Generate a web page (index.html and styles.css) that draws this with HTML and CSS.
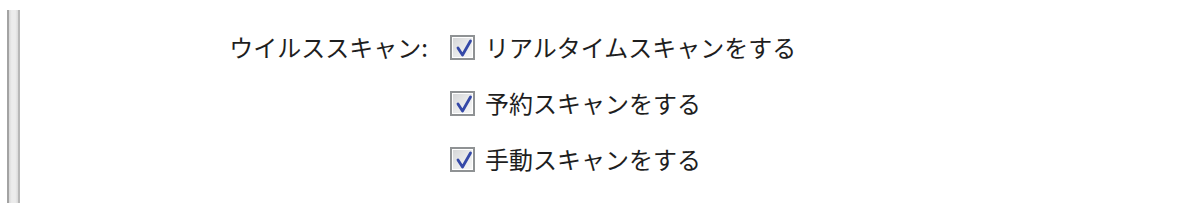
FILE: index.html
```html
<!DOCTYPE html>
<html lang="ja">
<head>
<meta charset="utf-8">
<link rel="stylesheet" href="styles.css">
</head>
<body>
<div class="page">
  <div class="bar"></div>
  <div class="form">
    <div class="label">ウイルススキャン:</div>
    <div class="options">
      <label class="opt"><span class="cb"><svg viewBox="0 0 21 21" width="21" height="21"><path d="M6 11 L10.5 18 L18.5 4" fill="none" stroke="#3549a8" stroke-width="2.8" stroke-linecap="round" stroke-linejoin="round"/></svg></span><span class="txt">リアルタイムスキャンをする</span></label>
      <label class="opt"><span class="cb"><svg viewBox="0 0 21 21" width="21" height="21"><path d="M6 11 L10.5 18 L18.5 4" fill="none" stroke="#3549a8" stroke-width="2.8" stroke-linecap="round" stroke-linejoin="round"/></svg></span><span class="txt">予約スキャンをする</span></label>
      <label class="opt"><span class="cb"><svg viewBox="0 0 21 21" width="21" height="21"><path d="M6 11 L10.5 18 L18.5 4" fill="none" stroke="#3549a8" stroke-width="2.8" stroke-linecap="round" stroke-linejoin="round"/></svg></span><span class="txt">手動スキャンをする</span></label>
    </div>
  </div>
</div>
</body>
</html>
```
FILE: styles.css
```css
html, body {
  margin: 0;
  padding: 0;
  background: #ffffff;
}
body {
  width: 1199px;
  height: 203px;
  overflow: hidden;
  font-family: "Noto Sans CJK JP", "Noto Sans", sans-serif;
  color: #1e1e1e;
  font-size: 24px;
}
.page {
  display: flex;
  align-items: flex-start;
}
.bar {
  margin-left: 7px;
  margin-top: 10px;
  width: 9px;
  height: 193px;
  border-left: 2px solid #a3a3a3;
  border-right: 2px solid #b8b8b8;
  background: linear-gradient(to right, #d8d8d8, #ececec 30%, #ececec 70%, #dadada);
}
.form {
  display: flex;
  align-items: flex-start;
  padding-top: 19px;
}
.label {
  width: 408px;
  height: 56px;
  display: flex;
  align-items: center;
  justify-content: flex-end;
  line-height: 1;
}
.options {
  display: flex;
  flex-direction: column;
  margin-left: 22px;
}
.opt {
  height: 56px;
  display: flex;
  align-items: center;
  gap: 10px;
  line-height: 1;
}
.cb {
  box-sizing: border-box;
  width: 25px;
  height: 25px;
  border: 2px solid #8f9294;
  box-shadow: inset 0 0 0 1px #ffffff;
  background: linear-gradient(135deg, #d3d4d6 0%, #e8e9ea 50%, #f8f8f8 100%);
  display: flex;
  align-items: center;
  justify-content: center;
}
.cb svg {
  display: block;
}
```
